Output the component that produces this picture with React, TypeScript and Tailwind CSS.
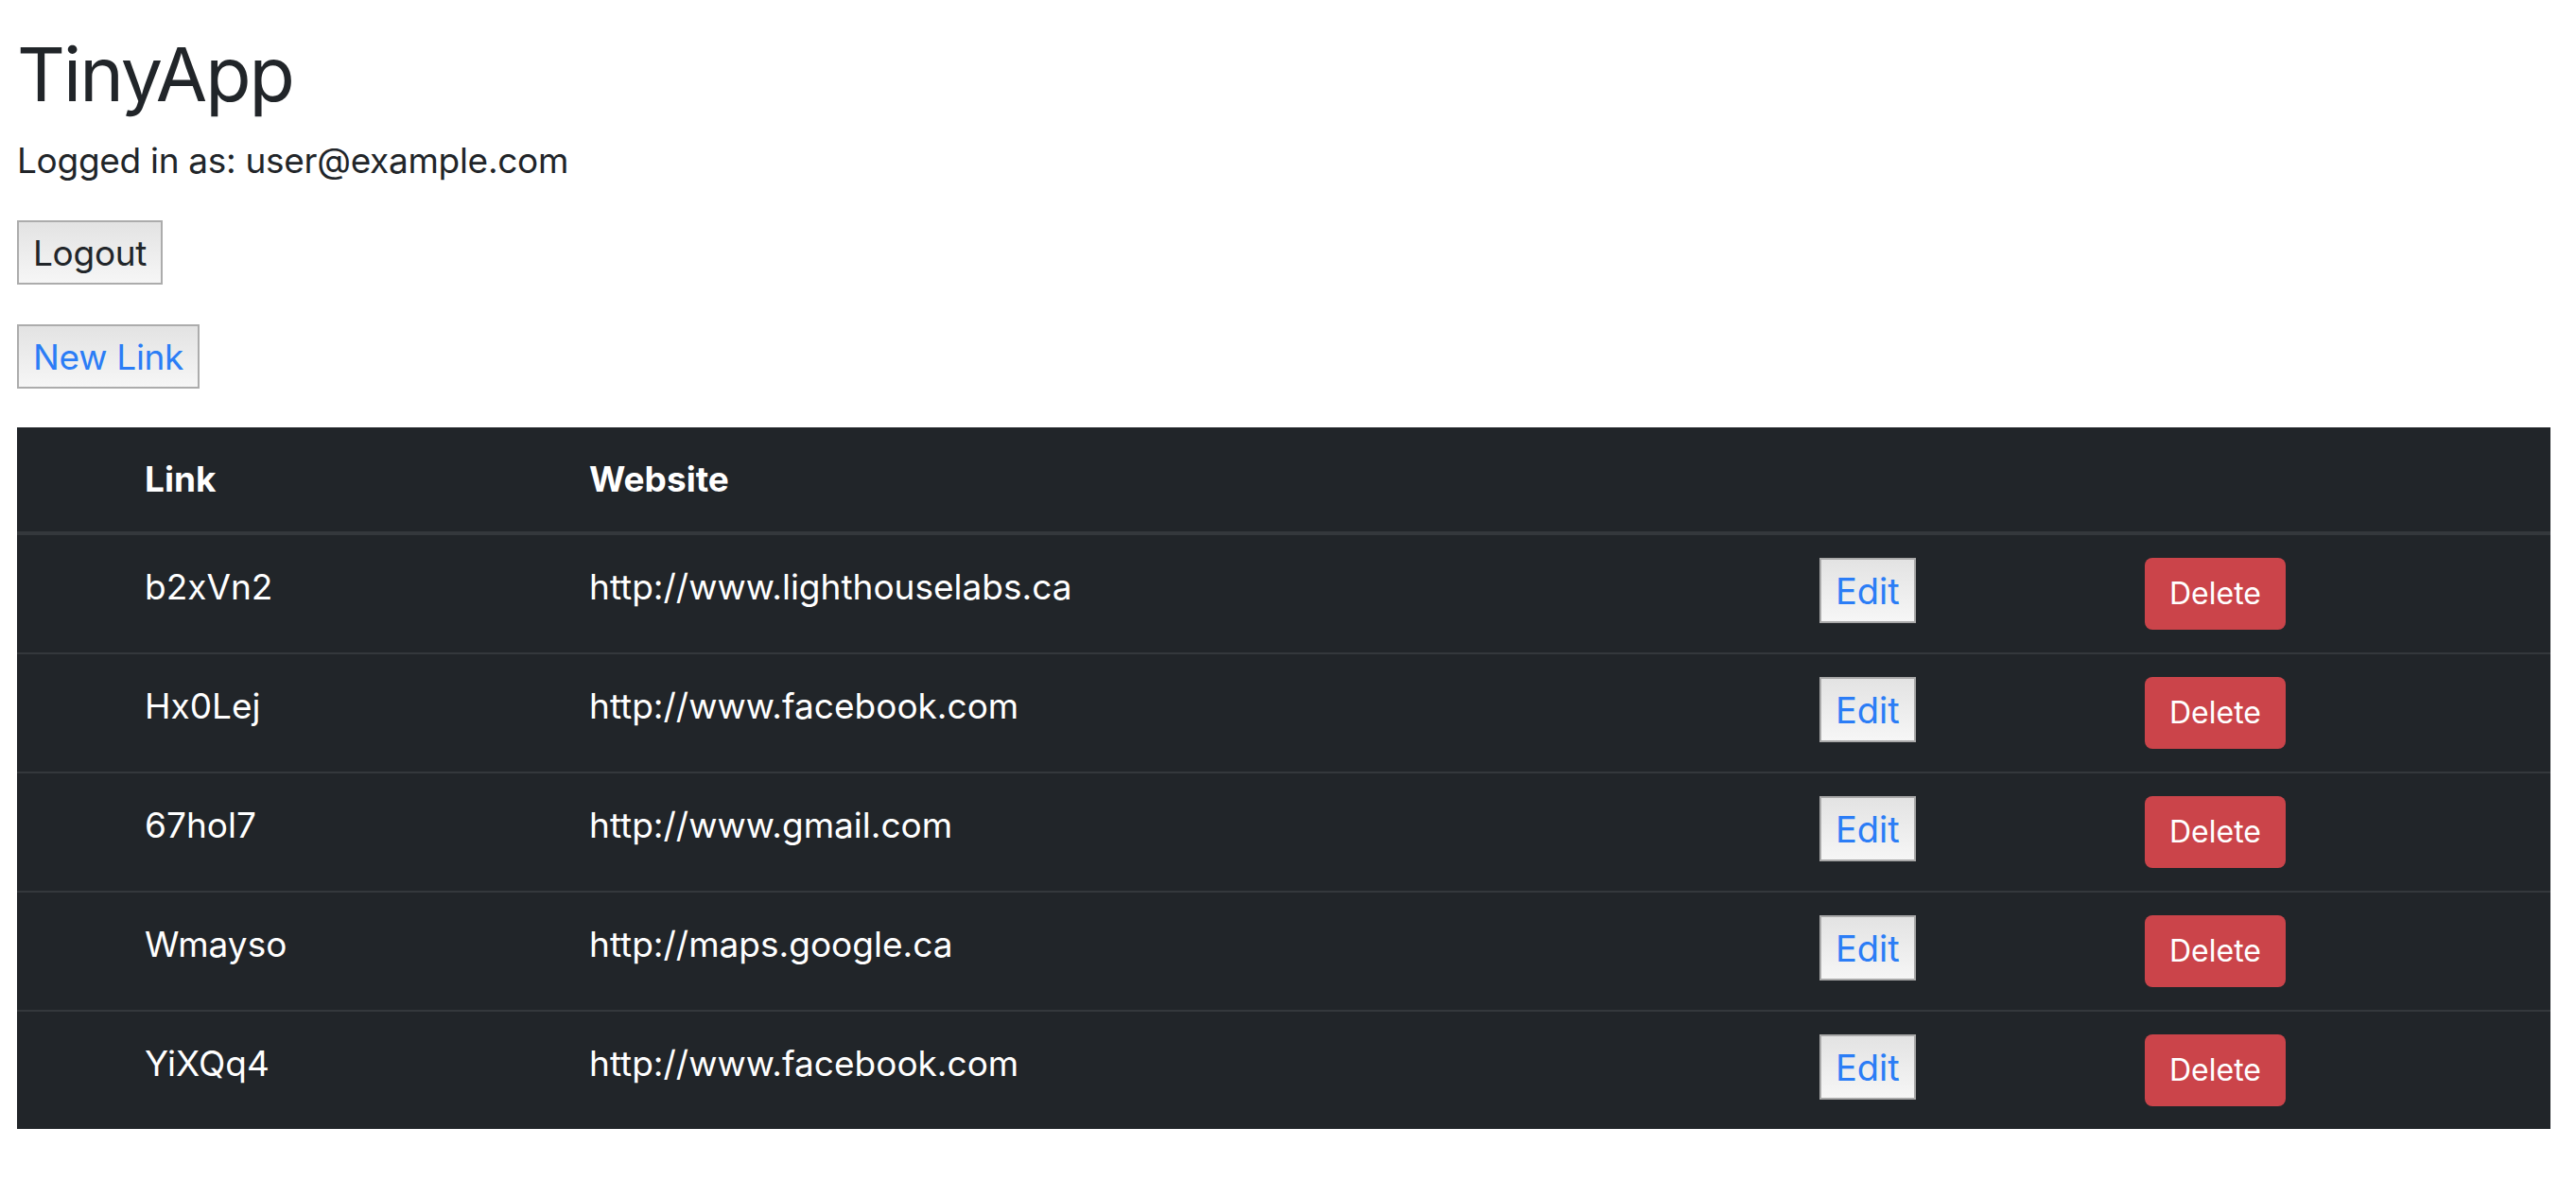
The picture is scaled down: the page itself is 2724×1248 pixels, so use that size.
type UrlRow = {
  id: string;
  longURL: string;
};

const urls: UrlRow[] = [
  { id: "b2xVn2", longURL: "http://www.lighthouselabs.ca" },
  { id: "Hx0Lej", longURL: "http://www.facebook.com" },
  { id: "67hol7", longURL: "http://www.gmail.com" },
  { id: "Wmayso", longURL: "http://maps.google.ca" },
  { id: "YiXQq4", longURL: "http://www.facebook.com" },
];

const plainButton =
  "flex h-[68px] items-center border-2 border-[#acacac] bg-gradient-to-b from-[#e3e3e3] to-[#f6f6f6] px-[15px] text-[37px] leading-none tracking-[-0.3px]";

export default function App() {
  return (
    <main
      className="min-h-screen bg-white pl-[18px] pr-[27px] pt-[30px] text-[#212529]"
      style={{ fontFamily: "Inter, 'Liberation Sans', sans-serif" }}
    >
      <h1 className="text-[79px] font-normal leading-[96px] tracking-[-2px]">TinyApp</h1>
      <p className="mt-[15px] text-[37px] leading-[57px] tracking-[-0.3px]">
        Logged in as: user@example.com
      </p>

      <div className="mt-[35px] flex">
        <button className={`${plainButton} text-[#212529]`}>Logout</button>
      </div>

      <div className="mt-[42px] flex">
        <button className={`${plainButton} text-[#2b7df6]`}>New Link</button>
      </div>

      <table className="mt-[41px] w-full table-fixed border-collapse bg-[#212529] text-[37px] text-white">
        <colgroup>
          <col className="w-[135px]" />
          <col className="w-[470px]" />
          <col className="w-[1301px]" />
          <col className="w-[344px]" />
          <col />
        </colgroup>
        <thead>
          <tr className="h-[112px] border-b-4 border-[#34383c]">
            <th />
            <th className="text-left align-middle font-bold">Link</th>
            <th className="text-left align-middle font-bold">Website</th>
            <th />
            <th />
          </tr>
        </thead>
        <tbody>
          {urls.map((url, i) => (
            <tr
              key={url.id}
              className={i < urls.length - 1 ? "border-b-2 border-[#34383c]" : ""}
            >
              <td />
              <td className="pt-[26px] pb-[25px] align-top leading-[57px]">{url.id}</td>
              <td className="pt-[26px] pb-[25px] align-top leading-[57px]">{url.longURL}</td>
              <td className="pt-[24px] pb-[25px] align-top">
                <button className="flex h-[69px] items-center border-2 border-[#a9a9a9] bg-gradient-to-b from-[#e3e3e3] to-[#f6f6f6] px-[15px] text-[38px] leading-none text-[#2b7df6]">
                  Edit
                </button>
              </td>
              <td className="pt-[24px] pb-[24px] align-top">
                <button className="flex h-[76px] items-center rounded-[8px] bg-[#cb444a] px-[26px] text-[32px] leading-none text-white">
                  Delete
                </button>
              </td>
            </tr>
          ))}
        </tbody>
      </table>
    </main>
  );
}
